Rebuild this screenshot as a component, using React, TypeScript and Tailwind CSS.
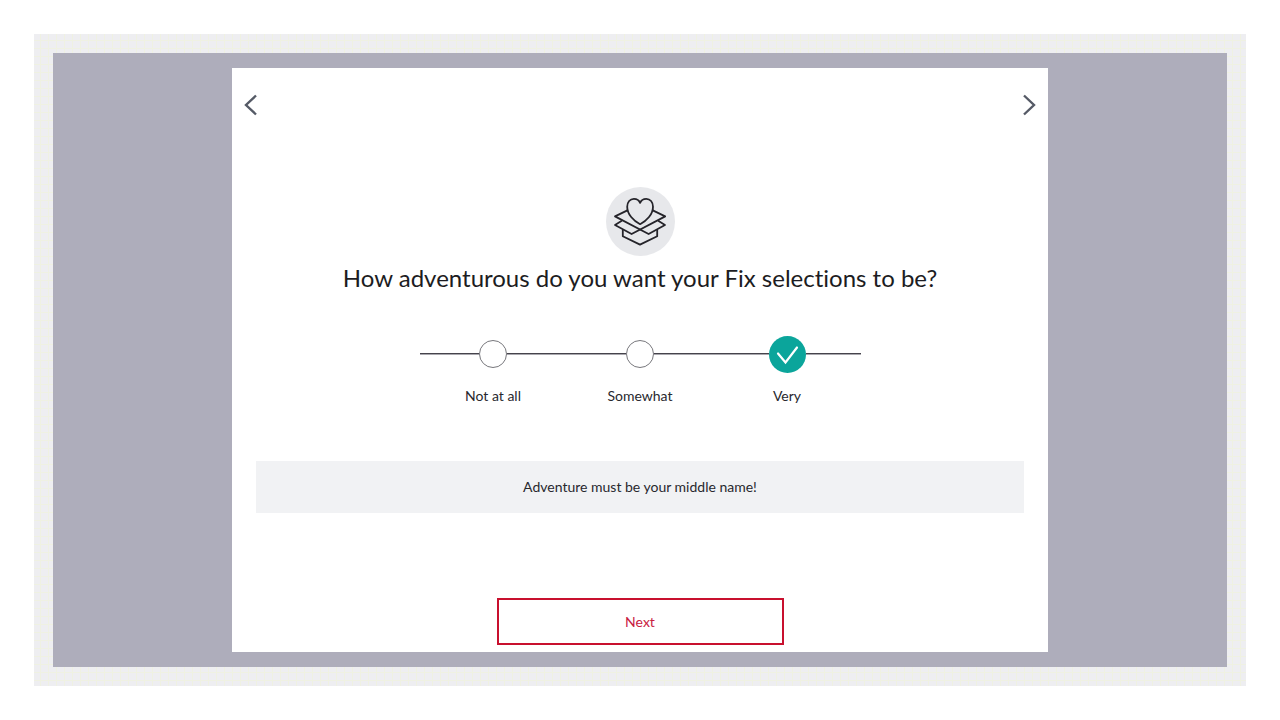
import React, { useState } from 'react';

interface Option {
  id: string;
  label: string;
  message: string;
}

const options: Option[] = [
  { id: 'not-at-all', label: 'Not at all', message: 'We will keep it familiar.' },
  { id: 'somewhat', label: 'Somewhat', message: 'A little variety it is!' },
  { id: 'very', label: 'Very', message: 'Adventure must be your middle name!' },
];

const BoxIcon: React.FC = () => (
  <svg viewBox="0 0 69 69" className="size-[69px]" fill="none" aria-hidden="true">
    <circle cx="34.5" cy="34.5" r="34.5" fill="#e7e8eb" />
    <g stroke="#25242a" strokeWidth="1.8" strokeLinejoin="round" strokeLinecap="round">
      <path d="M21.4 23.4 9 29.4 42.6 47 59 38 52.6 34" />
      <path d="M46.8 23.4 59.2 29.4 25.6 47 9 38 15.4 34" />
      <path d="M16.8 43V49.2L34 57.6 51.2 49.2V43" />
      <path
        d="M34.1 37.2C27.5 33.8 21.2 27.3 21.2 19.7C21.2 15 24.1 11.8 27.9 11.8C30.7 11.8 33.1 13.3 34.1 15.8C35.1 13.3 37.5 11.8 40.3 11.8C44.1 11.8 47 15 47 19.7C47 27.3 40.7 33.8 34.1 37.2Z"
        fill="#e7e8eb"
      />
    </g>
  </svg>
);

const Chevron: React.FC<{ d: string }> = ({ d }) => (
  <svg viewBox="0 0 14 22" className="h-[22px] w-[14px]" fill="none" stroke="#555a66" strokeWidth="2.4" aria-hidden="true">
    <path d={d} />
  </svg>
);

const Line: React.FC = () => <span className="h-0.5 flex-1 border-t border-[#45434b] bg-[#a9a8ae]" />;

const App: React.FC = () => {
  const [selected, setSelected] = useState('very');
  const current = options.find((option) => option.id === selected);

  return (
    <div className="flex min-h-screen bg-white p-[34px] font-[Lato,sans-serif] text-[#28282e] [font-variant-ligatures:none]">
      <div className="flex flex-1 bg-[#eeeef1] bg-[linear-gradient(#eff1e2_1px,transparent_1px),linear-gradient(90deg,#eff1e2_1px,transparent_1px)] bg-[size:8px_8px] bg-[position:6px_6px] p-[19px]">
        <div className="flex flex-1 justify-center bg-[#aeadbb] py-[15px]">
          <main className="flex w-full max-w-[816px] flex-col bg-white px-6 pb-[7px]">
            <nav className="-mx-3 flex justify-between pt-[26px]">
              <button type="button" aria-label="Previous">
                <Chevron d="M12 1.5 2 11l10 9.5" />
              </button>
              <button type="button" aria-label="Next question">
                <Chevron d="M2 1.5 12 11 2 20.5" />
              </button>
            </nav>

            <div className="mt-[71px] flex flex-col items-center">
              <BoxIcon />
              <h1 id="question" className="mt-1 text-center text-2xl leading-9 text-[#1c1c22]">
                How adventurous do you want your Fix selections to be?
              </h1>
            </div>

            <div role="radiogroup" aria-labelledby="question" className="mt-10 flex w-full max-w-[441px] self-center">
              {options.map((option) => (
                <div key={option.id} className="flex flex-1 flex-col items-center">
                  <div className="flex h-9 w-full items-center">
                    <Line />
                    <span className="relative flex shrink-0 items-center justify-center">
                      <input
                        type="radio"
                        id={option.id}
                        name="adventure"
                        checked={selected === option.id}
                        onChange={() => setSelected(option.id)}
                        className="size-7 cursor-pointer appearance-none rounded-full border border-[#77777c] bg-white checked:size-[37px] checked:border-0 checked:bg-[#0ba59b]"
                      />
                      {selected === option.id && (
                        <svg viewBox="0 0 37 37" className="pointer-events-none absolute inset-0" fill="none" stroke="#fff" strokeWidth="2.2" strokeLinecap="round" aria-hidden="true">
                          <path d="M9 17.5 16.5 26.5 28 11.5" />
                        </svg>
                      )}
                    </span>
                    <Line />
                  </div>
                  <label htmlFor={option.id} className="mt-3 cursor-pointer text-sm leading-6">
                    {option.label}
                  </label>
                </div>
              ))}
            </div>

            <p className="mt-[53px] bg-[#f1f2f4] py-[14px] text-center text-sm leading-6">{current?.message}</p>

            <button
              type="button"
              className="mt-auto h-[47px] w-full max-w-[287px] self-center border-2 border-[#c8102e] text-sm text-[#c8203f]"
            >
              Next
            </button>
          </main>
        </div>
      </div>
    </div>
  );
};

export default App;
